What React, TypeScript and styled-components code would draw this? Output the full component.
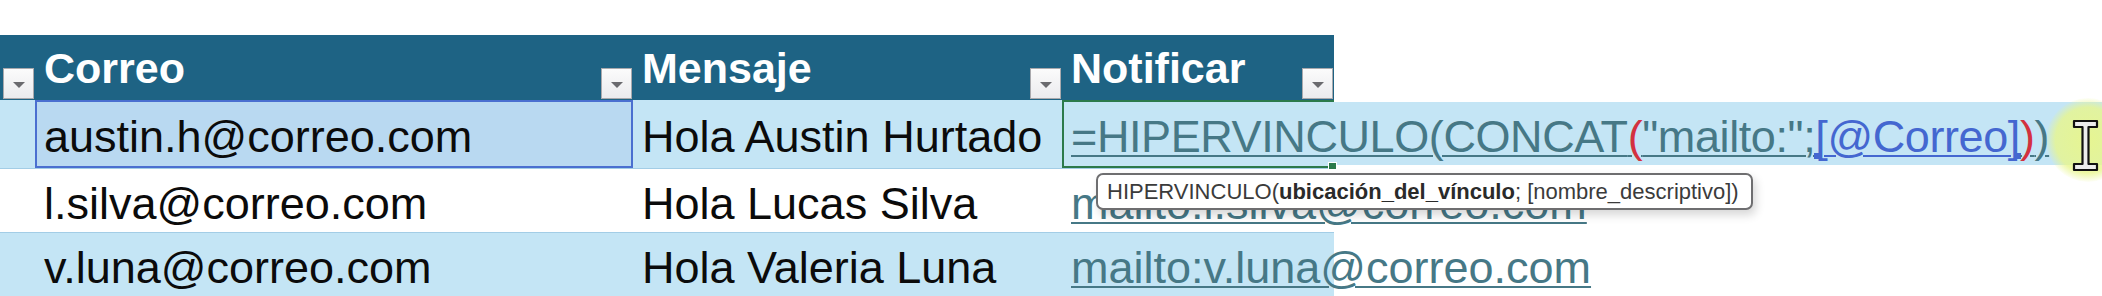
import React from 'react';
import styled, { createGlobalStyle } from 'styled-components';

const GlobalStyle = createGlobalStyle`
  html, body {
    margin: 0;
    padding: 0;
    background: #ffffff;
    font-family: 'Liberation Sans', Arial, sans-serif;
  }
`;

const COLS = '35px 598px 429px 272px';
const BAND = '#c4e5f5';
const LINK = '#467886';
const RED = '#d3313f';
const REF = '#4467d0';
const GREEN = '#2c7a4b';

const Sheet = styled.div`
  position: relative;
  width: 2102px;
  height: 296px;
  overflow: hidden;
  padding-top: 35px;
  box-sizing: border-box;
`;

const HeaderRow = styled.div`
  display: grid;
  grid-template-columns: ${COLS};
  width: 1334px;
  height: 65px;
  background: #1e6384;
`;

const HeaderCell = styled.div`
  display: flex;
  align-items: flex-end;
  justify-content: space-between;
  min-width: 0;
`;

const HeaderLabel = styled.span`
  padding-left: 9px;
  margin-bottom: 10px;
  font-size: 43px;
  line-height: 43px;
  font-weight: 700;
  color: #ffffff;
  white-space: nowrap;
`;

const FilterButton = styled.div`
  width: 31px;
  height: 31px;
  margin: 0 1px 1px auto;
  box-sizing: border-box;
  border: 1px solid #a9a9ad;
  background: linear-gradient(#fbfbfb, #ebebee);
  display: flex;
  align-items: center;
  justify-content: center;

  &::after {
    content: '';
    margin-top: 3px;
    border-left: 6px solid transparent;
    border-right: 6px solid transparent;
    border-top: 6px solid #6a6a6e;
  }
`;

const Row = styled.div<{ $h: number }>`
  display: flex;
  height: ${p => p.$h}px;
  width: 100%;
`;

const TablePart = styled.div<{ $band: boolean; $line: boolean }>`
  display: grid;
  grid-template-columns: ${COLS};
  width: 1334px;
  flex: none;
  box-sizing: border-box;
  background: ${p => (p.$band ? BAND : '#ffffff')};
  border-top: ${p => (p.$line ? '1px solid #a3cde6' : 'none')};
`;

const Cell = styled.div<{ $pt: number }>`
  position: relative;
  padding: ${p => p.$pt}px 0 0 9px;
  font-size: 45px;
  line-height: 45px;
  color: #0b0b0b;
  white-space: nowrap;
  min-width: 0;
`;

const RefCell = styled(Cell)`
  background: #b9d9f1;
  box-shadow: inset 0 0 0 2px #4a6fd0;
`;

const ActiveCell = styled(Cell)`
  z-index: 2;
  letter-spacing: -0.4px;
  box-shadow: inset 2px 0 0 ${GREEN}, inset 0 2px 0 ${GREEN}, inset 0 -2px 0 ${GREEN};
`;

const FillHandle = styled.span`
  position: absolute;
  right: -3px;
  bottom: -2px;
  width: 7px;
  height: 6px;
  background: ${GREEN};
  border: 1px solid #ffffff;
`;

const EditorTail = styled.div`
  flex: 1;
  margin: 2px 0 3px;
  background: ${BAND};
`;

const Link = styled.span`
  color: ${LINK};
  text-decoration: underline;
  text-decoration-thickness: 2px;
  text-underline-offset: 3px;
`;

const Tok = styled.span<{ $c: string; $u: string }>`
  position: relative;
  color: ${p => p.$c};
  text-decoration: underline;
  text-decoration-color: ${p => p.$u};
  text-decoration-thickness: 2px;
  text-underline-offset: 3px;
`;

const RangeMark = styled.span<{ $side: 'left' | 'right' }>`
  position: absolute;
  bottom: 3px;
  ${p => (p.$side === 'left' ? 'left: -1px;' : 'right: -1px;')}
  width: 6px;
  height: 6px;
  background: ${REF};
`;

const Tooltip = styled.div`
  position: absolute;
  left: 1096px;
  top: 173px;
  z-index: 5;
  height: 37px;
  box-sizing: border-box;
  padding: 3px 12px 0 9px;
  border: 2px solid #6e6e70;
  border-radius: 7px;
  background: #ffffff;
  box-shadow: 3px 5px 10px rgba(0, 0, 0, 0.16);
  font-size: 22px;
  line-height: 27px;
  color: #3b3b3b;
  white-space: nowrap;

  b {
    color: #2a2a2a;
  }
`;

const Glow = styled.div`
  position: absolute;
  left: 2046px;
  top: 98px;
  width: 84px;
  height: 84px;
  border-radius: 50%;
  z-index: 6;
  background: radial-gradient(
    circle,
    rgba(232, 246, 140, 0.95) 0%,
    rgba(232, 246, 140, 0.8) 55%,
    rgba(232, 246, 140, 0) 72%
  );
`;

const Cursor = styled.svg`
  position: absolute;
  left: 2072px;
  top: 119px;
  z-index: 7;
`;

const FilterCell: React.FC<{ label?: string }> = ({ label }) => (
  <HeaderCell>
    {label && <HeaderLabel>{label}</HeaderLabel>}
    <FilterButton />
  </HeaderCell>
);

const App: React.FC = () => {
  return (
    <>
      <GlobalStyle />
      <Sheet>
        <HeaderRow>
          <FilterCell />
          <FilterCell label="Correo" />
          <FilterCell label="Mensaje" />
          <FilterCell label="Notificar" />
        </HeaderRow>

        <Row $h={68}>
          <TablePart $band={true} $line={false}>
            <Cell $pt={14} />
            <RefCell $pt={14}>austin.h@correo.com</RefCell>
            <Cell $pt={14}>Hola Austin Hurtado</Cell>
            <ActiveCell $pt={14}>
              <Tok $c={LINK} $u={LINK}>=HIPERVINCULO(CONCAT</Tok>
              <Tok $c={RED} $u={LINK}>(</Tok>
              <Tok $c={LINK} $u={LINK}>"mailto:";</Tok>
              <Tok $c={REF} $u={REF}>
                [@Correo]
                <RangeMark $side="left" />
                <RangeMark $side="right" />
              </Tok>
              <Tok $c={RED} $u={LINK}>)</Tok>
              <Tok $c={LINK} $u={LINK}>)</Tok>
              <FillHandle />
            </ActiveCell>
          </TablePart>
          <EditorTail />
        </Row>

        <Row $h={64}>
          <TablePart $band={false} $line={true}>
            <Cell $pt={12} />
            <Cell $pt={12}>l.silva@correo.com</Cell>
            <Cell $pt={12}>Hola Lucas Silva</Cell>
            <Cell $pt={12}>
              <Link>mailto:l.silva@correo.com</Link>
            </Cell>
          </TablePart>
        </Row>

        <Row $h={64}>
          <TablePart $band={true} $line={true}>
            <Cell $pt={12} />
            <Cell $pt={12}>v.luna@correo.com</Cell>
            <Cell $pt={12}>Hola Valeria Luna</Cell>
            <Cell $pt={12}>
              <Link>mailto:v.luna@correo.com</Link>
            </Cell>
          </TablePart>
        </Row>

        <Tooltip>
          HIPERVINCULO(<b>ubicación_del_vínculo</b>; [nombre_descriptivo])
        </Tooltip>

        <Glow />
        <Cursor width="27" height="54" viewBox="0 0 27 54">
          <path
            d="M2 2 H25 V8 H16.5 V45 H25 V51 H2 V45 H10.5 V8 H2 Z"
            fill="#ececec"
            stroke="#111111"
            strokeWidth="2.2"
            strokeLinejoin="round"
          />
        </Cursor>
      </Sheet>
    </>
  );
};

export default App;
